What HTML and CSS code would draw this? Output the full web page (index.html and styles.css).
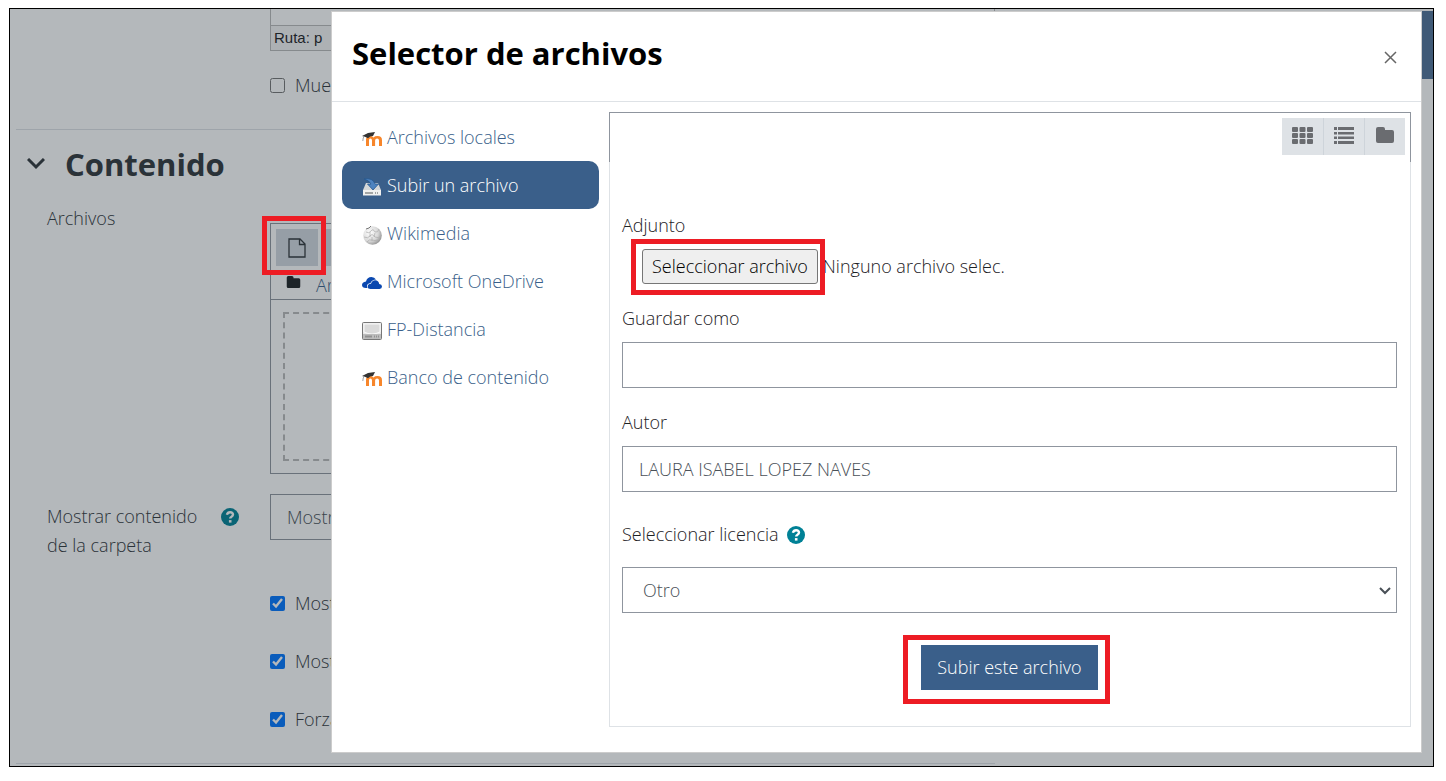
FILE: index.html
```html
<!DOCTYPE html>
<html lang="es">
<head>
  <meta charset="UTF-8" />
  <meta name="viewport" content="width=device-width, initial-scale=1.0" />
  <title>Selector de archivos</title>
  <link rel="stylesheet" href="styles.css">
</head>
<body>

  <!-- shared icons -->
  <svg class="sprite" aria-hidden="true">
    <symbol id="moodle" viewBox="0 0 20 16">
      <path d="M4 15V8.500Q4 5 8 5q2.300 0 3.500 1.400Q12.800 5 15.500 5 20 5 20 9.200V15h-3V9.400q0-2-1.900-2-2 0-2 2V15H10V9.400q0-2-1.700-2Q7 7.400 7 9.400V15z" fill="#f7862b" />
      <path d="M0 5 6 2l7-1-2 4q-3-.2-5 2.300L3.500 6z" fill="#333" />
      <path d="M2.500 5Q.8 6.500.8 10" fill="none" stroke="#888" stroke-width=".8" />
    </symbol>
    <symbol id="folder" viewBox="0 0 18 16">
      <path d="M2 0h5q2 0 2 2v1h7q2 0 2 2v9q0 2-2 2H2q-2 0-2-2V2Q0 0 2 0z" fill="currentColor" />
    </symbol>
    <symbol id="help" viewBox="0 0 18 18">
      <circle cx="9" cy="9" r="9" fill="#008196" />
      <path d="M5.900 6.700Q6.600 4.200 9.100 4.200q2.900 0 2.900 2.400 0 1.300-1.500 2.100-1.300.7-1.300 1.900" fill="none" stroke="#fff" stroke-width="2.400" />
      <path d="M7.900 12.100h2.600v2.500H7.900z" fill="#fff" />
    </symbol>
  </svg>

  <div class="frame">

    <!-- course form behind the dialog -->
    <div class="navbar"></div>
    <form class="page">
      <div class="row">
        <div class="editor">
          <div class="editor-text"></div>
          <div class="editor-status">Ruta: p</div>
        </div>
      </div>
      <div class="row first-check">
        <label class="check"><input type="checkbox" /> Muestra</label>
      </div>
      <hr />

      <h2 class="section">
        <svg class="chevron" viewBox="0 0 18 12"><path d="m1 1 8 8 8-8" fill="none" stroke="currentColor" stroke-width="3" /></svg>
        Contenido
      </h2>

      <div class="row">
        <span class="row-label">Archivos</span>
        <div class="filemanager">
          <div class="fm-toolbar">
            <div class="mark mark-add">
              <button type="button" class="fm-btn" aria-label="Agregar">
                <svg width="18" height="20" viewBox="0 0 18 20"><path d="M1 1h11l5 5v13H1zM11.500 1v5.500H17" fill="none" stroke="currentColor" stroke-width="1.300" /></svg>
              </button>
            </div>
            <button type="button" class="fm-btn" aria-label="Crear carpeta"></button>
          </div>
          <div class="fm-path">
            <svg class="fm-folder"><use href="#folder" /></svg>
            <a href="#">Archivos</a>
          </div>
          <div class="fm-content"><div class="dropzone"></div></div>
        </div>
      </div>

      <div class="row display-row">
        <div class="row-label with-help">
          <label for="display">Mostrar contenido de la carpeta</label>
          <svg class="help"><use href="#help" /></svg>
        </div>
        <select id="display" class="field"><option>Mostrar</option></select>
      </div>

      <div class="row checks">
        <label class="check"><input type="checkbox" checked /> Mostrar</label>
        <label class="check"><input type="checkbox" checked /> Mostrar</label>
        <label class="check"><input type="checkbox" checked /> Forzar</label>
      </div>
      <hr />
    </form>

    <div class="backdrop"></div>

    <!-- file picker -->
    <div class="modal" role="dialog" aria-labelledby="title">
      <header class="modal-header">
        <h1 id="title">Selector de archivos</h1>
        <button type="button" class="close" aria-label="Cerrar">
          <svg width="13" height="13" viewBox="0 0 13 13"><path d="m1 1 11 11M12 1 1 12" stroke="currentColor" stroke-width="1.500" /></svg>
        </button>
      </header>

      <div class="modal-body">
        <nav class="repos">
          <a href="#"><svg><use href="#moodle" /></svg>Archivos locales</a>
          <a href="#" class="active">
            <svg viewBox="0 0 20 18">
              <path d="M4 5h12l3 7v5H1v-5z" fill="#d6d8d8" />
              <path d="M1 12h18v5.500H1z" fill="#f1f1ef" />
              <path d="M3 14h8v2H3zM13 14h1v2h-1zM15 14h1v2h-1z" fill="#a3a5a4" />
              <path d="M2 1Q11-.5 13 6h3.500L11 12 5.500 6H9Q7.500 2.500 2 1z" fill="#4e83bf" stroke="#26588f" stroke-width=".8" />
            </svg>Subir un archivo</a>
          <a href="#">
            <svg viewBox="0 0 20 20">
              <defs><radialGradient id="globe" cx=".35" cy=".35" r=".75"><stop offset="0" stop-color="#fff" /><stop offset=".6" stop-color="#d8d8d8" /><stop offset="1" stop-color="#888" /></radialGradient></defs>
              <circle cx="10.500" cy="10.500" r="9.300" fill="url(#globe)" />
              <path d="M4 7q3 2 5-1t4 1q3 1 4-3M2 12q4 2 6-1t5 1q4 2 6-1M5 17q2-3 5-2t6 0M8 7v5M13 8l-1 4M10 12v4" fill="none" stroke="#aaa" stroke-width=".7" />
              <path d="m3 0 5 1-1 2-3 1z" fill="#fff" />
              <path d="m4 4 3-1 2-2" fill="none" stroke="#777" />
            </svg>Wikimedia</a>
          <a href="#">
            <svg viewBox="0 0 20 14">
              <path d="M4 12Q0 12 0 9t4-3.500Q5 1 9.500 1q3 0 4.500 2.500-4 0-5.500 3.500Q5 7.500 5 10q0 1.300.6 2z" fill="#0a48b0" />
              <path d="M8.500 13Q5.700 13 5.700 10.500T9 7.700Q10 4.200 13.200 4.200q3.300 0 4 3.700Q20 8.300 20 10.500T17.500 13z" fill="#0a48b0" />
            </svg>Microsoft OneDrive</a>
          <a href="#">
            <svg viewBox="0 0 20 18">
              <rect x=".5" y=".5" width="19" height="17" rx="1" fill="#e8e8e8" stroke="#777" />
              <path d="M2 2h16v8q-8 4-16 0z" fill="#dadada" stroke="#fff" stroke-width=".8" />
              <path d="M1 12h18v5H1z" fill="#bcbcbc" />
              <path d="M3 13.500h7v2H3zM12 13.500h1v2h-1zM14 13.500h1v2h-1zM16 13.500h1v2h-1z" fill="#929292" />
            </svg>FP-Distancia</a>
          <a href="#"><svg><use href="#moodle" /></svg>Banco de contenido</a>
        </nav>

        <section class="panel">
          <div class="toolbar">
            <div class="views">
              <button type="button" aria-label="Iconos">
                <svg width="21" height="17" viewBox="0 0 21 17" fill="currentColor">
                  <rect width="6" height="5" rx="1" /><rect x="7.500" width="6" height="5" rx="1" /><rect x="15" width="6" height="5" rx="1" />
                  <rect y="6" width="6" height="5" rx="1" /><rect x="7.500" y="6" width="6" height="5" rx="1" /><rect x="15" y="6" width="6" height="5" rx="1" />
                  <rect y="12" width="6" height="5" rx="1" /><rect x="7.500" y="12" width="6" height="5" rx="1" /><rect x="15" y="12" width="6" height="5" rx="1" />
                </svg>
              </button>
              <button type="button" aria-label="Lista">
                <svg width="20" height="17" viewBox="0 0 20 17" fill="currentColor"><path d="M0 0h3v3H0zM4 0h16v3H4zM0 5h3v2.500H0zM4 5h16v2.500H4zM0 9.500h3V12H0zM4 9.500h16V12H4zM0 14h3v3H0zM4 14h16v3H4z" /></svg>
              </button>
              <button type="button" aria-label="Árbol">
                <svg width="18" height="16"><use href="#folder" /></svg>
              </button>
            </div>
          </div>

          <form class="upload">
            <label for="pick">Adjunto</label>
            <div class="attach">
              <div class="mark mark-pick"><button type="button" id="pick" class="pick">Seleccionar archivo</button></div>
              <span>Ninguno archivo selec.</span>
            </div>

            <label for="saveas">Guardar como</label>
            <input type="text" id="saveas" class="field" />

            <label for="author">Autor</label>
            <input type="text" id="author" class="field" value="LAURA ISABEL LOPEZ NAVES" />

            <div class="license-label">
              <label for="license">Seleccionar licencia</label>
              <svg class="help"><use href="#help" /></svg>
            </div>
            <div class="select-wrap">
              <select id="license" class="field"><option>Otro</option></select>
              <svg class="caret" viewBox="0 0 12 8"><path d="m1 1 5 5 5-5" fill="none" stroke="#495057" stroke-width="2" /></svg>
            </div>

            <div class="mark mark-submit"><button type="button" class="submit">Subir este archivo</button></div>
          </form>
        </section>
      </div>
    </div>

  </div>
</body>
</html>
```

FILE: styles.css
```css
* {
  box-sizing: border-box;
}

body {
  margin: 8px 12px 14px 9px;
  background: #fff;
  color: #1d2125;
  font-family: "Open Sans", "Noto Sans", sans-serif;
  font-size: 18px;
  font-weight: 350;
  line-height: 29px;
}

button, input, select {
  margin: 0;
  font: inherit;
  color: inherit;
}

svg {
  display: block;
  flex: none;
}

a {
  color: #3a5f8a;
  text-decoration: none;
}

.sprite {
  position: absolute;
  width: 0;
  height: 0;
}

.frame {
  position: relative;
  overflow: hidden;
  border: 1px solid #000;
}

.backdrop {
  position: absolute;
  inset: 0;
  background: rgba(30, 42, 51, 0.333);
}

.navbar {
  position: absolute;
  top: 2px;
  right: 0;
  width: 20%;
  height: 68px;
  background: #52729a;
}

/* page form */
.page {
  max-width: 985px;
  padding: 0 0 2px 6px;
  color: #31363b;
}

.page hr {
  margin: 29px 0 0;
  border: 0;
  border-top: 1px solid #dee2e6;
}

.row {
  display: grid;
  grid-template-columns: 223px 1fr;
  padding-left: 31px;
}

.row > :only-child {
  grid-column: 2;
}

.editor {
  border: 1px solid #bbb;
  border-top: 0;
}

.editor-text {
  height: 16px;
}

.editor-status {
  height: 25px;
  padding-left: 3px;
  border-top: 1px solid #bbb;
  background: #f5f5f5;
  color: #1d2125;
  font-family: "Liberation Sans", Arial, sans-serif;
  font-size: 15px;
  line-height: 24px;
}

.first-check {
  margin-top: 20px;
}

.check {
  display: flex;
  align-items: center;
  gap: 10px;
}

.check input {
  width: 15px;
  height: 15px;
}

.section {
  display: flex;
  align-items: center;
  gap: 20px;
  margin: 17px 0 23px;
  padding-left: 11px;
  font-size: 31px;
  font-weight: 700;
  line-height: 34px;
}

.chevron {
  width: 18px;
  height: 12px;
}

.filemanager {
  margin-top: 19px;
  border: 1px solid #8f959e;
}

.fm-toolbar {
  display: flex;
  gap: 4px;
  padding: 5px 5px 0;
}

.fm-btn {
  display: flex;
  align-items: center;
  justify-content: center;
  width: 42px;
  height: 37px;
  padding: 0;
  border: 0;
  background: #d2d8e0;
}

.fm-path {
  display: flex;
  gap: 15px;
  height: 34px;
  padding: 5px 15px 0;
  border-bottom: 1px solid #8f959e;
}

.fm-folder {
  width: 15px;
  height: 12px;
  margin-top: 5px;
  color: #1d2125;
}

.fm-content {
  padding: 12px;
}

.dropzone {
  height: 149px;
  border: 2px dashed #bbb;
}

.display-row {
  margin-top: 20px;
}

.with-help {
  display: flex;
  gap: 8px;
  padding-top: 8px;
}

.with-help label {
  width: 166px;
}

.help {
  width: 18px;
  height: 18px;
  margin-top: 6px;
}

.checks {
  margin-top: 29px;
  row-gap: 29px;
}

.checks .check {
  grid-column: 2;
}

/* form controls */
.field {
  display: block;
  width: 100%;
  height: 46px;
  padding: 0 16px;
  border: 1px solid #8f959e;
  border-radius: 0;
  background: #fff;
  color: #495057;
}

select.field {
  appearance: none;
}

/* red outlines */
.mark {
  position: relative;
}

.mark::after {
  content: "";
  position: absolute;
  z-index: 2;
  border: 5px solid #ed1c24;
  pointer-events: none;
}

.mark-add::after {
  inset: -13px -8px -9px -14px;
}

.mark-pick::after {
  inset: -10px -7px -11px -11px;
}

.mark-submit::after {
  inset: -10px -12px -14px -18px;
}

/* modal */
.modal {
  position: absolute;
  top: 2px;
  right: 11px;
  left: 321px;
  border: 1px solid #ccc;
  background: #fff;
}

.modal-header {
  display: flex;
  align-items: flex-start;
  justify-content: space-between;
  padding: 21px 20px 28px;
  border-bottom: 1px solid #dee2e6;
}

.modal-header h1 {
  margin: 0;
  color: #000;
  font-size: 31px;
  font-weight: 700;
  line-height: 40px;
}

.close {
  margin-top: 14px;
  padding: 4px;
  border: 0;
  background: none;
  color: #666;
}

.modal-body {
  display: grid;
  grid-template-columns: 257px 1fr;
  gap: 10px;
  padding: 10px 10px 25px;
}

.repos {
  padding-top: 1px;
}

.repos a {
  display: flex;
  align-items: center;
  gap: 5px;
  height: 48px;
  padding: 0 20px;
  border-radius: 10px;
}

.repos .active {
  background: #3a5f8a;
  color: #fff;
}

.repos svg {
  width: 20px;
  height: 20px;
  margin-top: 4px;
}

.panel {
  border: 1px solid #dee2e6;
  border-top: 0;
}

.toolbar {
  display: flex;
  justify-content: flex-end;
  height: 50px;
  margin: 0 -1px;
  padding: 5px;
  border: 1px solid #8f959e;
  border-bottom: 0;
}

.views {
  display: flex;
  height: 37px;
  background: #dee2e6;
}

.views button {
  display: flex;
  align-items: center;
  justify-content: center;
  width: 41px;
  padding: 0 0 3px;
  border: 0;
  background: none;
  color: #6a6c70;
}

.views button + button {
  border-left: 1px solid #ced4da;
}

.upload {
  display: flex;
  flex-direction: column;
  padding: 49px 13px 36px 12px;
}

.attach {
  display: flex;
  align-items: center;
  gap: 5px;
  padding: 9px 20px 20px;
}

.pick {
  display: block;
  height: 35px;
  padding: 0 9px;
  border: 1px solid #767676;
  border-radius: 3px;
  background: #efefef;
  color: #000;
}

.upload .field {
  margin: 9px 0 20px;
}

.license-label {
  display: flex;
  gap: 8px;
  margin-top: 8px;
}

.select-wrap {
  position: relative;
}

.select-wrap .field {
  margin: 18px 0 32px;
  padding-left: 20px;
}

.caret {
  position: absolute;
  top: 38px;
  right: 6px;
  width: 12px;
  height: 8px;
}

.mark-submit {
  align-self: center;
}

.submit {
  display: block;
  height: 45px;
  padding: 0 16px;
  border: 0;
  background: #3a5f8a;
  color: #fff;
}
```
